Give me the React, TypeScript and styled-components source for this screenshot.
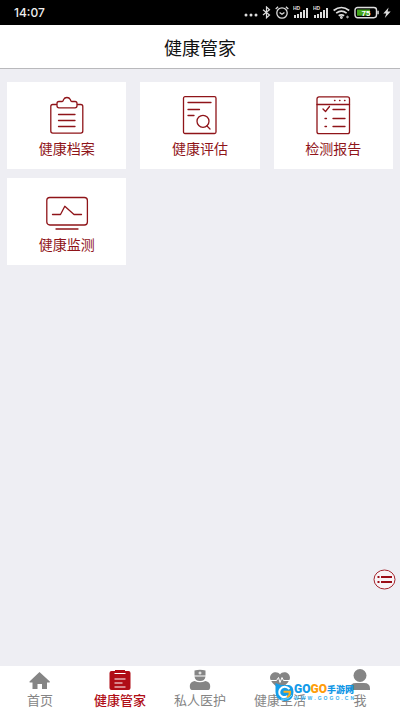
import React from 'react';
import styled, { createGlobalStyle } from 'styled-components';

const RED = '#8f1419';
const cjk = '"Noto Sans CJK SC", sans-serif';

const GlobalStyle = createGlobalStyle`
  * { box-sizing: border-box; }
  body { margin: 0; font-family: ${cjk}; background: #eeeef3; }
  svg { display: block; flex: none; }
`;

const Page = styled.div`
  position: relative;
  display: flex;
  flex-direction: column;
  min-height: 100vh;
  background: #eeeef3;
`;

const StatusBar = styled.div`
  display: flex;
  align-items: center;
  justify-content: space-between;
  height: 25px;
  padding: 0 9px 0 14px;
  background: #000;
  color: #eee;
`;

const Clock = styled.time`
  font: 500 12px/25px Inter, sans-serif;
`;

const StatusIcons = styled.div`
  display: flex;
  align-items: center;
  gap: 4px;
`;

const Header = styled.header`
  display: flex;
  align-items: center;
  justify-content: center;
  height: 44px;
  background: #fff;
  border-bottom: 1px solid #b9b9bc;
`;

const Title = styled.h1`
  margin: 0;
  font-size: 18px;
  font-weight: 400;
  line-height: 24px;
  color: #111;
`;

const Main = styled.main`
  flex: 1;
  padding: 13px 7px;
`;

const Grid = styled.div`
  display: grid;
  grid-template-columns: repeat(3, 1fr);
  gap: 9px 14px;
`;

const Tile = styled.button`
  display: flex;
  flex-direction: column;
  align-items: center;
  gap: 4px;
  padding: 14px 0 13px;
  border: 0;
  background: #fff;
  color: ${RED};
  font-family: ${cjk};
  font-size: 14px;
  line-height: 16px;
  cursor: pointer;
`;

const FloatButton = styled.button`
  position: fixed;
  right: 4px;
  bottom: 121px;
  padding: 0;
  border: 0;
  background: none;
  cursor: pointer;
`;

const TabBar = styled.nav`
  position: sticky;
  bottom: 0;
  display: grid;
  grid-template-columns: repeat(5, 1fr);
  height: 45px;
  background: #fff;
`;

const Tab = styled.a<{ $active?: boolean }>`
  display: flex;
  flex-direction: column;
  align-items: center;
  padding-top: 2px;
  color: ${p => (p.$active ? '#b00d16' : '#858585')};
  font-size: 13px;
  font-weight: ${p => (p.$active ? 500 : 400)};
  line-height: 16px;
  text-decoration: none;
`;

const Watermark = styled.div`
  position: absolute;
  right: 46px;
  bottom: 9px;
  display: flex;
  align-items: center;
  pointer-events: none;
`;

const Brand = styled.div`
  display: flex;
  flex-direction: column;
`;

const BrandName = styled.div`
  display: flex;
  align-items: center;
  height: 13px;
  white-space: nowrap;
  font: 900 9px/13px ${cjk};
  color: #1297e6;
`;

const BrandLatin = styled.span<{ $orange?: boolean }>`
  font: 900 12px/13px Roboto, sans-serif;
  color: ${p => (p.$orange ? '#ff9d0a' : '#149be9')};
`;

const BrandUrl = styled.div`
  display: flex;
  justify-content: space-between;
  font: 700 5px/5px "Liberation Sans", sans-serif;
  color: #35b0ee;
`;

const Signal = () => (
  <svg width="16" height="13" viewBox="0 0 16 13" fill="#ddd">
    <text x="0" y="4" fontSize="5" fontWeight="700" fontFamily="Liberation Sans, sans-serif">HD</text>
    <path d="M1 9h2v3H1zM4 8h2v4H4zM7 6h2v6H7zM10 4h2v8h-2zM13 2h2v10h-2z" />
  </svg>
);

const StatusGlyphs = () => (
  <StatusIcons>
    <svg width="14" height="13" fill="#ddd">
      <circle cx="2" cy="9" r="1.5" /><circle cx="7" cy="9" r="1.5" /><circle cx="12" cy="9" r="1.5" />
    </svg>
    <svg width="9" height="13" fill="none" stroke="#ddd" strokeWidth="1.2">
      <path d="M1 3.700l6.500 5.300-3 2.800V1l3 2.700L1 9" />
    </svg>
    <svg width="14" height="13" fill="none" stroke="#ddd" strokeWidth="1.3">
      <circle cx="7" cy="7" r="5.200" /><path d="M4.600 6.400L7 8.200l2.400-1.800M.7 3l2.400-2.200M13.300 3l-2.400-2.200" />
    </svg>
    <Signal />
    <Signal />
    <svg width="17" height="13" fill="none" stroke="#ddd" strokeWidth="1.7">
      <path d="M.6 4.500q7.800-6 15.600 0M3.200 7.200q5.200-4 10.400 0M5.700 9.800q2.700-2 5.400 0" />
      <circle cx="8.400" cy="11.500" r=".6" /><circle cx="14.500" cy="11" r=".8" strokeWidth="1" />
    </svg>
    <svg width="25" height="13">
      <rect x="1" y="1.500" width="21.500" height="10.200" rx="2.600" fill="none" stroke="#ddd" strokeWidth="1.400" />
      <path d="M3 3.500h13v6.200H3z" fill="#43a51c" />
      <path d="M23.300 4.800h1.500v3.400h-1.500z" fill="#ddd" />
      <text x="12" y="9.500" fill="#fff" fontSize="8" fontWeight="700" textAnchor="middle" fontFamily="Liberation Sans, sans-serif">75</text>
    </svg>
    <svg width="8" height="13" fill="#ddd"><path d="M5.600 1.400L.3 7.400h2.900L1.800 12l5.900-6.400H4.600z" /></svg>
  </StatusIcons>
);

const TileIcon = ({ children }: { children: React.ReactNode }) => (
  <svg width="44" height="40" viewBox="0 0 44 40" fill="none" stroke={RED} strokeWidth="1.3" strokeLinecap="round" strokeLinejoin="round">
    {children}
  </svg>
);

const tiles = [
  {
    label: '健康档案',
    icon: (
      <TileIcon>
        <path d="M11.500 8.500H7.800a2 2 0 0 0-2 2v24.600a2 2 0 0 0 2 2h28a2 2 0 0 0 2-2V10.500a2 2 0 0 0-2-2h-3.300" />
        <path d="M14 5.500h3.300c.7-.2.900-1.200 1.300-2 1.300-2.700 5.400-2.700 6.700 0 .4.800.6 1.800 1.300 2H30a2 2 0 0 1 2 2v2.300a2 2 0 0 1-2 2H14a2 2 0 0 1-2-2V7.500a2 2 0 0 1 2-2z" />
        <path d="M13.500 18.500h16.500M13.500 24.500h16.500M13.500 30.500h16.500" />
      </TileIcon>
    ),
  },
  {
    label: '健康评估',
    icon: (
      <TileIcon>
        <rect x="5.500" y=".7" width="32.500" height="36.800" rx="1.500" />
        <path d="M10 6.500h23M10 13.500h11.500M10 19.500h6" />
        <circle cx="25" cy="25.300" r="6" />
        <path d="M29 30l3 3" />
      </TileIcon>
    ),
  },
  {
    label: '检测报告',
    icon: (
      <TileIcon>
        <rect x="6" y=".9" width="32.500" height="36.800" rx="2" />
        <path d="M6 8.500h32.500M12 13l2.500 2.500 4-5M22 13.500h12M22 22.500h12M22 30.500h12M14 22.500h1.500M14 30.500h1.500M23.500 4.500h.5M28.500 4.500h.5M33.500 4.500h.5" />
      </TileIcon>
    ),
  },
  {
    label: '健康监测',
    icon: (
      <TileIcon>
        <rect x="1.800" y="5.500" width="40.600" height="27.500" rx="3" />
        <path d="M7.500 22.500h8l4.300-8.200L29 22.500h7.500M11 37h22" />
      </TileIcon>
    ),
  },
];

const TabIcon = ({ children }: { children: React.ReactNode }) => (
  <svg width="24" height="24" viewBox="0 0 24 24" fill="currentColor">{children}</svg>
);

const tabs = [
  {
    label: '首页',
    icon: <path d="M11.500 4L1.500 13.500q-.4 1 .6 1h2.400V21h5v-5h4.500v5h5v-6.500h2.300q1 0 .5-1z" />,
  },
  {
    label: '健康管家',
    active: true,
    icon: (
      <>
        <path d="M3.500 3H7V2h10v1h3.500q2 0 2 2v15q0 2-2 2h-17q-2 0-2-2V5q0-2 2-2z" />
        <path d="M6.500 5.500h11M6.500 11h11M6.500 15h8M6.500 19h11" fill="none" stroke="#fff" strokeWidth="1.200" />
      </>
    ),
  },
  {
    label: '私人医护',
    icon: (
      <>
        <path d="M6.500 2.500q5.500-1.500 11 0v5h-11zM6.500 8.500h11q-.6 4.500-5.500 4.500T6.500 8.500z" />
        <path d="M6.500 13q5.500 2.500 11 0 4.700 1 4.700 5 0 4-2 4H4q-2.200 0-2.200-4 0-4 4.700-5z" />
        <path d="M12 3.500v3M10.500 5h3" stroke="#fff" strokeWidth="1" />
      </>
    ),
  },
  {
    label: '健康生活',
    icon: (
      <>
        <path d="M12 6.500C9.500 2.500 2 4 2 10q0 4 10 11.500Q22 14 22 10C22 4 14.500 2.500 12 6.500z" />
        <path d="M2 12.500h6.500l2-3 1.500 5 2-5 1.500 3H22" fill="none" stroke="#fff" strokeWidth="1" />
      </>
    ),
  },
  {
    label: '我',
    icon: (
      <>
        <ellipse cx="12" cy="7.500" rx="6.500" ry="6.500" />
        <path d="M2 22v-1.500Q2 15 8 15h8q6 0 6 5.500V22z" />
      </>
    ),
  },
];

export default function App() {
  return (
    <Page>
      <GlobalStyle />
      <StatusBar>
        <Clock>14:07</Clock>
        <StatusGlyphs />
      </StatusBar>
      <Header><Title>健康管家</Title></Header>
      <Main>
        <Grid>
          {tiles.map(t => (
            <Tile key={t.label} type="button">{t.icon}{t.label}</Tile>
          ))}
        </Grid>
      </Main>
      <FloatButton type="button" aria-label="菜单">
        <svg width="23" height="21" viewBox="0 0 23 21" fill="none" stroke="#a3222a">
          <ellipse cx="11.500" cy="10.500" rx="10.500" ry="9.500" fill="#f8f4f7" />
          <path d="M8 8h11M8 13h11M4.500 8h2M4.500 13h2" stroke="#9b0d16" strokeWidth="1.800" />
        </svg>
      </FloatButton>
      <TabBar>
        {tabs.map(t => (
          <Tab key={t.label} href="#" $active={t.active}>
            <TabIcon>{t.icon}</TabIcon>
            {t.label}
          </Tab>
        ))}
      </TabBar>
      <Watermark>
        <svg width="19" height="20" viewBox="0 0 19 20" fill="none">
          <path d="M.5 1l5 2H14q4.500 1 4.500 7 0 9-9 9-9-1-9-9z" fill="#159ee9" />
          <path d="M14.500 7Q11 3.500 7 5.500 3.500 8 4.500 12q3 5 8 2" stroke="#fff" strokeWidth="2" />
          <path d="M8.500 9.800h6.500q0 4-3 5.500" stroke="#ffb01f" strokeWidth="2" />
          <path d="M6 17q7 1.500 11-4" stroke="#7dd8fb" strokeWidth="1" />
        </svg>
        <Brand>
          <BrandName>
            <BrandLatin>GO</BrandLatin>
            <BrandLatin $orange>GO</BrandLatin>
            手游网
          </BrandName>
          <BrandUrl aria-label="WWW.GOGO.CN">
            {'WWW.GOGO.CN'.split('').map((c, i) => <span key={i}>{c}</span>)}
          </BrandUrl>
        </Brand>
      </Watermark>
    </Page>
  );
}
